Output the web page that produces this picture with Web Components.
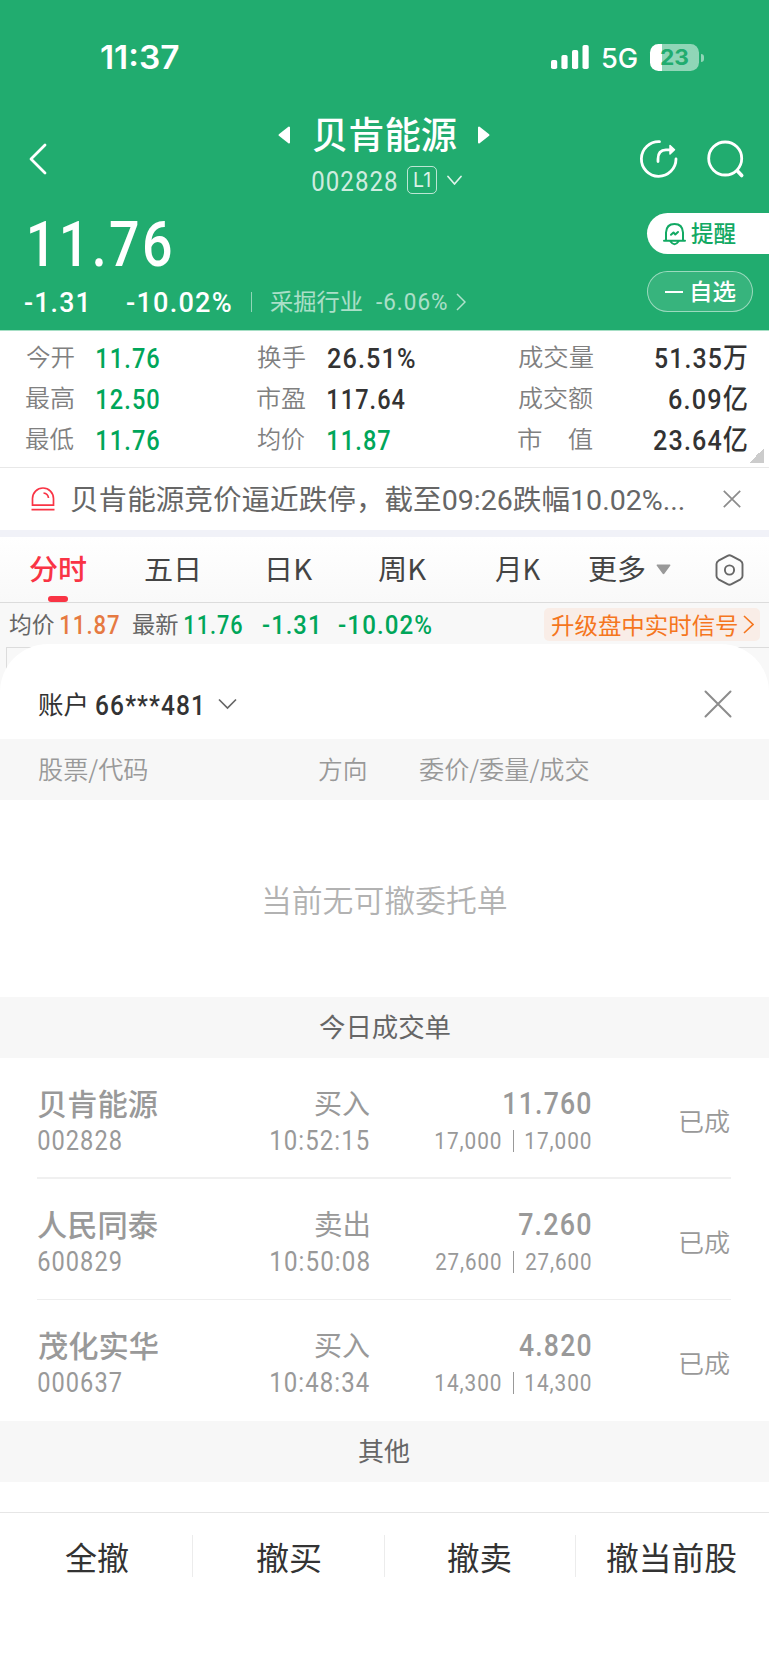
<!DOCTYPE html>
<html lang="zh-CN">
<head>
<meta charset="utf-8">
<title>贝肯能源 002828</title>
<style>
  body {
    margin: 0;
    width: 769px;
    height: 1665px;
    overflow: hidden;
    background: #fff;
    color: #333;
    font-family: Roboto, "Noto Sans CJK SC", sans-serif;
    --green: #21ac6f;
    --down: #00a65a;
    --red: #f93445;
    --grey: #999;
  }
</style>
</head>
<body>
<stock-page></stock-page>

<script>
/**
 * Registers an element whose shadow root is cloned from a template.
 * @param {string} name
 * @param {string} html
 * @returns {void}
 */
const register = (name, html) => {
  const template = document.createElement('template');
  template.innerHTML = html;
  customElements.define(name, class extends HTMLElement {
    constructor () {
      super();
      this._shadowRoot = this.attachShadow({ mode: 'open' });
      this._shadowRoot.append(template.content.cloneNode(true));
    }
  });
};

register('status-bar', `
  <style>
  :host {
    display: flex;
    align-items: center;
    height: 116px;
    padding: 0 65px 0 101px;
    box-sizing: border-box;
    font-family: Inter, sans-serif;
  }
  .time { font-size: 32px; font-weight: 600; margin: 1px auto 0 0; }
  .signal { width: 38px; height: 24px; margin: -2px 13px 0 0; }
  .net { font-size: 27px; font-weight: 500; margin: 2px 13px 0 0; }
  .battery {
    display: flex;
    align-items: center;
    width: 38px;
    height: 27px;
    padding-left: 11px;
    margin-top: -1px;
    border-radius: 8.5px;
    background: linear-gradient(90deg, #fff 12px, rgba(255, 255, 255, .5) 12px);
    color: var(--green);
    font-size: 21.5px;
    font-weight: 700;
  }
  .nub { width: 3px; height: 8px; margin: -1px 0 0 2px; border-radius: 0 3px 3px 0; background: rgba(255, 255, 255, .5); }
  </style>
  <ink-text class="time" w="78">11:37</ink-text>
  <svg class="signal" viewBox="0 0 38 24" fill="#fff">
    <rect x="0" y="15" width="6.2" height="9" rx="1.8"/>
    <rect x="10.4" y="10" width="6.2" height="14" rx="1.8"/>
    <rect x="21" y="5" width="6.2" height="19" rx="1.8"/>
    <rect x="31.5" y="0" width="6.2" height="24" rx="1.8"/>
  </svg>
  <ink-text class="net" w="35">5G</ink-text>
  <div class="battery"><ink-text w="27">23</ink-text></div>
  <div class="nub"></div>
`);

register('title-bar', `
  <style>
  :host { display: flex; height: 89px; padding: 0 23px 0 29px; align-items: flex-start; }
  svg { display: block; fill: none; stroke: #fff; stroke-linecap: round; stroke-linejoin: round; }
  .back { width: 18px; height: 32px; margin-top: 27px; }
  .center { flex: 1; display: flex; flex-direction: column; }
  .name { display: flex; align-items: center; padding-left: 231px; height: 38px; }
  .name ink-text { font-size: 37px; font-weight: 500; margin: -4px 20px 0 22px; font-family: "Noto Sans CJK SC", sans-serif; }
  .code { display: flex; align-items: center; padding-left: 265px; height: 28px; margin-top: 12px; }
  .code > ink-text { font-size: 28px; color: rgba(255, 255, 255, .8); margin-top: 3px; }
  .level {
    display: flex;
    align-items: center;
    justify-content: center;
    width: 28px;
    height: 26px;
    margin: 0 10px 0 10px;
    border: 1px solid rgba(255, 255, 255, .7);
    border-radius: 5px;
    font: 20px Inter, sans-serif;
    color: rgba(255, 255, 255, .85);
  }
  .tools { display: flex; gap: 27px; padding-top: 23px; }
  </style>
  <svg class="back" viewBox="0 0 18 32" stroke-width="2.8"><path d="M16 2 2 16 16 30"/></svg>
  <div class="center">
    <div class="name">
      <svg width="13" height="20" viewBox="0 0 13 20" stroke-width="2"><path fill="#fff" d="M11 2.500V17.500L1.500 10Z"/></svg>
      <ink-text w="144">贝肯能源</ink-text>
      <svg width="13" height="20" viewBox="0 0 13 20" stroke-width="2"><path fill="#fff" d="M2 2.500V17.500L11.500 10Z"/></svg>
    </div>
    <div class="code">
      <ink-text w="85">002828</ink-text>
      <span class="level"><ink-text w="16">L1</ink-text></span>
      <svg width="15" height="11" viewBox="0 0 15 11" stroke-width="1.700" opacity=".85"><path d="M1 1.500 7.500 9 14 1.500"/></svg>
    </div>
  </div>
  <div class="tools">
    <svg width="40" height="40" viewBox="0 0 40 40" stroke-width="2.800">
      <path d="M20.500 2.700A17.300 17.300 0 1 0 37 20"/>
      <path d="M19 22.500V20Q19 10.800 27 10.800H33"/>
      <path fill="#fff" stroke-width="1.500" d="M31 6.500 35.500 10.800 31 15Z"/>
    </svg>
    <svg width="40" height="40" viewBox="0 0 40 40" stroke-width="2.800">
      <circle cx="19.200" cy="19.500" r="16.500"/><path stroke-width="3.600" d="M31.500 32 35.700 36.500"/>
    </svg>
  </div>
`);

register('price-panel', `
  <style>
  :host { display: grid; grid-template-columns: 1fr 122px; height: 125px; }
  .big { height: 79px; line-height: 79px; padding-left: 30px; font-size: 63px; font-weight: 500; }
  .sub { display: flex; align-items: center; height: 38px; padding-left: 25px; font-size: 28px; font-weight: 500; }
  .pct { margin-left: 41px; }
  .bar { width: 1px; height: 20px; margin: -3px 18px 0 20px; background: rgba(255, 255, 255, .5); }
  .trade { font: 23px "Noto Sans CJK SC", sans-serif; opacity: .62; margin-top: -6px; }
  .tradepct { font-size: 24px; font-weight: 400; opacity: .62; margin: -2px 9px 0 14px; }
  .side { display: flex; flex-direction: column; gap: 17px; padding-top: 8px; }
  .pill { display: flex; align-items: center; height: 41px; box-sizing: border-box; font: 500 23px "Noto Sans CJK SC", sans-serif; }
  .remind { background: #fff; color: #12a963; border-radius: 21px 0 0 21px; padding-left: 15px; }
  .remind ink-text { margin: -1px 0 0 5px; }
  .mine { width: 106px; border: 1px solid rgba(255, 255, 255, .5); border-radius: 21px; background: rgba(255, 255, 255, .1); padding-left: 17px; }
  .mine i { width: 18px; height: 2px; background: #fff; margin-right: 9px; }
  .mine ink-text { margin-top: -1px; }
  </style>
  <div>
    <div class="big"><ink-text w="141">11.76</ink-text></div>
    <div class="sub">
      <ink-text w="61">-1.31</ink-text>
      <ink-text class="pct" w="104">-10.02%</ink-text>
      <span class="bar"></span>
      <ink-text class="trade" w="92">采掘行业</ink-text>
      <ink-text class="tradepct" w="71">-6.06%</ink-text>
      <svg width="10" height="18" viewBox="0 0 10 18" fill="none" stroke="#fff" stroke-width="1.500" opacity=".65" style="margin-top:-3px"><path d="M1 1 9 9 1 17"/></svg>
    </div>
  </div>
  <div class="side">
    <div class="pill remind">
      <svg width="24" height="24" viewBox="0 0 24 24" fill="none" stroke="#12a963" stroke-width="2" stroke-linecap="round" stroke-linejoin="round">
        <path d="M4 18.500V10.500Q4.500 2 12.500 2T21 10.500V18.500M2 18.700H23M8.500 19.500Q12.500 25 16.500 19.500M9 12.800 11.500 10.500 13.300 12.500 16 10"/>
      </svg>
      <ink-text w="45">提醒</ink-text>
    </div>
    <div class="pill mine"><i></i><ink-text w="44">自选</ink-text></div>
  </div>
`);

register('stat-grid', `
  <style>
  :host {
    display: grid;
    grid-template-columns: 71px 160px 71px 190px 1fr auto;
    grid-auto-rows: 41px;
    align-items: center;
    height: 137px;
    box-sizing: border-box;
    padding: 8px 22px 0 26px;
    border-bottom: 1px solid #e8e8e8;
    position: relative;
    font-size: 28px;
    font-weight: 500;
  }
  ink-text { margin-top: -1px; }
  .k { font: 350 24px "Noto Sans CJK SC", sans-serif; color: #808080; margin-top: -9px; }
  .d { color: var(--down); }
  .r { justify-self: end; }
  .corner { position: absolute; right: 5px; bottom: 4px; width: 15px; height: 15px; background: linear-gradient(135deg, transparent 50%, #ccc 50%); }
  </style>
  <ink-text class="k" w="48">今开</ink-text><ink-text class="d" w="62">11.76</ink-text>
  <ink-text class="k" w="48">换手</ink-text><ink-text w="87">26.51%</ink-text>
  <ink-text class="k" w="75">成交量</ink-text><ink-text class="r" w="92">51.35万</ink-text>
  <ink-text class="k" w="48">最高</ink-text><ink-text class="d" w="62">12.50</ink-text>
  <ink-text class="k" w="48">市盈</ink-text><ink-text w="77">117.64</ink-text>
  <ink-text class="k" w="75">成交额</ink-text><ink-text class="r" w="78">6.09亿</ink-text>
  <ink-text class="k" w="48">最低</ink-text><ink-text class="d" w="62">11.76</ink-text>
  <ink-text class="k" w="48">均价</ink-text><ink-text class="d" w="62">11.87</ink-text>
  <ink-text class="k" w="74">市　值</ink-text><ink-text class="r" w="93">23.64亿</ink-text>
  <div class="corner"></div>
`);

register('notice-bar', `
  <style>
  :host { display: flex; align-items: center; height: 69px; box-sizing: border-box; padding: 0 28px 0 31px; border-bottom: 7px solid #f1f2f8; }
  ink-text { font-size: 28px; font-weight: 400; color: #666; margin: 4px auto 0 16px; }
  </style>
  <svg width="24" height="24" viewBox="0 0 24 24" fill="none" stroke="#f93445" stroke-width="1.700">
    <path d="M1.500 18.200V11.500A10.500 10.500 0 0 1 22.500 11.500V18.200ZM.500 22.700H23.500M12.500 6Q17 6.500 17.500 11"/>
  </svg>
  <ink-text w="613">贝肯能源竞价逼近跌停，截至09:26跌幅10.02%...</ink-text>
  <svg width="18" height="18" viewBox="0 0 18 18" stroke="#8c8c8c" stroke-width="1.700"><path d="M.800.800 17.200 17.200M17.200.800.800 17.200"/></svg>
`);

register('period-tabs', `
  <style>
  :host {
    display: flex;
    align-items: center;
    height: 66px;
    box-sizing: border-box;
    padding: 0 25px 0 30px;
    border-bottom: 1px solid #dcdcdc;
    background: linear-gradient(#fff, #f9f9f9);
    position: relative;
    font: 28px "Noto Sans CJK SC", sans-serif;
    color: #444;
  }
  ink-text { margin-top: -1px; }
  .on { color: var(--red); font-weight: 500; }
  .line { position: absolute; left: 48px; bottom: 0; width: 20px; height: 6px; border-radius: 3px; background: var(--red); }
  .set { margin-left: auto; }
  </style>
  <ink-text class="on" w="57">分时</ink-text>
  <ink-text w="53" style="margin-left:58px">五日</ink-text>
  <ink-text w="44" style="margin-left:70px">日K</ink-text>
  <ink-text w="48" style="margin-left:66px">周K</ink-text>
  <ink-text w="45" style="margin-left:69px">月K</ink-text>
  <ink-text w="56" style="margin-left:49px">更多</ink-text>
  <svg width="15" height="11" viewBox="0 0 15 11" style="margin-left:11px"><path fill="#999" d="M1 .500H14Q15 1 14 2L8.500 9.500Q7.500 11 6.500 9.500L1 2Q0 1 1 .500Z"/></svg>
  <svg class="set" width="29" height="32" viewBox="0 0 29 32" fill="none" stroke="#666" stroke-width="1.900" stroke-linejoin="round">
    <path d="M12.500 1.800Q14.500.800 16.500 1.800L25.500 6.700Q27.500 8 27.500 10V22Q27.500 24 25.500 25.300L16.500 30.200Q14.500 31.200 12.500 30.200L3.500 25.300Q1.500 24 1.500 22V10Q1.500 8 3.500 6.700Z"/>
    <circle cx="14.500" cy="16" r="4.600"/>
  </svg>
  <div class="line"></div>
`);

register('price-line', `
  <style>
  :host { display: flex; align-items: center; height: 41px; padding: 0 9px; background: #f8f8f8; font-size: 26px; font-weight: 500; color: var(--down); }
  ink-text { margin-top: 5px; }
  .k { font: 22.5px "Noto Sans CJK SC", sans-serif; color: #666; margin-top: -1px; }
  .up { display: flex; align-items: center; width: 209px; height: 33px; margin: 1px 0 0 auto; padding-left: 7px; border-radius: 5px; background: #f9ede7; }
  .up ink-text { font: 22.500px "Noto Sans CJK SC", sans-serif; color: #f5761e; margin: -1px 6px 0 0; }
  </style>
  <ink-text class="k" w="45">均价</ink-text>
  <ink-text w="58" style="margin-left:7px;color:#e67a42">11.87</ink-text>
  <ink-text class="k" w="45" style="margin-left:14px">最新</ink-text>
  <ink-text w="57" style="margin-left:7px">11.76</ink-text>
  <ink-text w="54" style="margin-left:21px">-1.31</ink-text>
  <ink-text w="92" style="margin-left:22px">-10.02%</ink-text>
  <div class="up">
    <ink-text w="186">升级盘中实时信号</ink-text>
    <svg width="11" height="19" viewBox="0 0 11 19" fill="none" stroke="#f5761e" stroke-width="1.600"><path d="M1 1 10 9.500 1 18"/></svg>
  </div>
`);

register('chart-area', `
  <style>
  :host { display: block; height: 1021px; box-sizing: border-box; background: #f8f8f8; position: relative; }
  .frame { position: absolute; top: 3px; left: 6px; right: 0; height: 60px; border: 1px solid #dcdcdc; border-width: 1px 0 0 1px; }
  .sheet { position: relative; height: 100%; border-radius: 48px 48px 0 0; background: #fff; overflow: hidden; }
  </style>
  <div class="frame"></div>
  <div class="sheet"><slot></slot></div>
`);

register('sheet-header', `
  <style>
  :host { display: flex; align-items: center; height: 95px; box-sizing: border-box; padding: 26px 37px 0 38px; }
  .k { font: 25px "Noto Sans CJK SC", sans-serif; margin-top: -4px; }
  .n { font-size: 27px; font-weight: 500; margin: 3px 17px 0 10px; }
  .x { margin: -2px 0 0 auto; }
  </style>
  <ink-text class="k" w="48">账户</ink-text>
  <ink-text class="n" w="105">66***481</ink-text>
  <svg width="19" height="12" viewBox="0 0 19 12" fill="none" stroke="#666" stroke-width="1.700" style="margin-top:-2px"><path d="M1 1.500 9.500 10 18 1.500"/></svg>
  <svg class="x" width="28" height="28" viewBox="0 0 28 28" stroke="#8c8c8c" stroke-width="2" stroke-linecap="round"><path d="M1.500 1.500 26.500 26.500M26.500 1.500 1.500 26.500"/></svg>
`);

register('table-head', `
  <style>
  :host { display: grid; grid-template-columns: 281px 100px 1fr; align-items: center; height: 61px; padding-left: 38px; background: #f7f7f7; color: var(--grey); font: 350 24.500px "Noto Sans CJK SC", sans-serif; }
  ink-text { margin-top: -1px; }
  </style>
  <ink-text w="109">股票/代码</ink-text>
  <ink-text w="47">方向</ink-text>
  <ink-text w="170">委价/委量/成交</ink-text>
`);

register('empty-tip', `
  <style>
  :host { display: flex; justify-content: center; align-items: center; height: 197px; color: #b2b2b2; font: 350 30.500px "Noto Sans CJK SC", sans-serif; }
  ink-text { margin-top: 1px; }
  </style>
  <ink-text w="242">当前无可撤委托单</ink-text>
`);

register('section-band', `
  <style>
  :host { display: flex; justify-content: center; align-items: center; height: 61px; background: #f7f7f7; color: #666; font: 26px "Noto Sans CJK SC", sans-serif; padding-bottom: 3px; box-sizing: border-box; }
  </style>
  <slot></slot>
`);

/**
 * @class TradeRow
 */
class TradeRow extends HTMLElement {
  /**
    * @function constructor
    */
  constructor () {
    super();
    const get = (name) => this.getAttribute(name);
    this._shadowRoot = this.attachShadow({ mode: 'open' });
    this._shadowRoot.innerHTML = `
      <style>
      :host {
        display: grid;
        grid-template-columns: 120px 211px 222px 1fr;
        grid-template-rows: 40px 30px;
        align-items: center;
        height: 121px;
        box-sizing: border-box;
        margin: 0 38px 0 37px;
        padding: 25px 2px 0 1px;
        border-bottom: var(--row-line, 1px solid #eee);
        color: var(--grey);
        font-weight: 500;
      }
      ink-text { justify-self: end; }
      .name { font: 500 30px "Noto Sans CJK SC", sans-serif; justify-self: start; margin-top: -3px; }
      .side { font: 28px "Noto Sans CJK SC", sans-serif; margin-top: -2px; }
      .price { font-size: 31px; margin-top: 1px; }
      .state { font: 350 25px "Noto Sans CJK SC", sans-serif; grid-row: 1 / 3; grid-column: 4; align-self: center; margin-top: 4px; }
      .code, .time { font-size: 27px; font-weight: 450; margin-top: 6px; }
      .code { justify-self: start; }
      .vol { display: flex; align-items: center; justify-content: flex-end; font-size: 24px; font-weight: 450; margin-top: 6px; }
      .vol i { width: 1.500px; height: 22px; margin: 0 12px; background: var(--grey); }
      </style>
      <ink-text class="name" w="120">${get('name')}</ink-text>
      <ink-text class="side" w="54">${get('side')}</ink-text>
      <ink-text class="price" w="${get('pw')}">${get('price')}</ink-text>
      <ink-text class="state" w="49">已成</ink-text>
      <ink-text class="code" w="83">${get('code')}</ink-text>
      <ink-text class="time" w="98">${get('time')}</ink-text>
      <div class="vol"><ink-text w="65">${get('volume')}</ink-text><i></i><ink-text w="65">${get('volume')}</ink-text></div>
    `;
  }
}
customElements.define('trade-row', TradeRow);

register('action-bar', `
  <style>
  :host { display: grid; grid-template-columns: repeat(4, 1fr); margin-top: 30px; padding: 22px 2px 0 0; border-top: 1px solid #e6e6e6; font: 32px "Noto Sans CJK SC", sans-serif; }
  div { display: flex; justify-content: center; align-items: center; height: 42px; border-left: 1px solid #ececec; }
  div:first-of-type { border-color: transparent; }
  </style>
  <div><ink-text w="63">全撤</ink-text></div>
  <div><ink-text w="63">撤买</ink-text></div>
  <div><ink-text w="63">撤卖</ink-text></div>
  <div><ink-text w="129">撤当前股</ink-text></div>
`);

register('stock-page', `
  <style>
  :host { display: block; }
  header { background: var(--green); color: #fff; border-bottom: 1px solid #a6dfc5; }
  .thick { --row-line: 2px solid #f0f0f0; }
  .last { --row-line: 0; }
  </style>
  <header>
    <status-bar></status-bar>
    <title-bar></title-bar>
    <price-panel></price-panel>
  </header>
  <stat-grid></stat-grid>
  <notice-bar></notice-bar>
  <period-tabs></period-tabs>
  <price-line></price-line>
  <chart-area>
    <sheet-header></sheet-header>
    <table-head></table-head>
    <empty-tip></empty-tip>
    <section-band><ink-text w="131">今日成交单</ink-text></section-band>
    <trade-row class="thick" name="贝肯能源" code="002828" side="买入" time="10:52:15" price="11.760" pw="87" volume="17,000"></trade-row>
    <trade-row name="人民同泰" code="600829" side="卖出" time="10:50:08" price="7.260" pw="72" volume="27,600"></trade-row>
    <trade-row class="last" name="茂化实华" code="000637" side="买入" time="10:48:34" price="4.820" pw="72" volume="14,300"></trade-row>
    <section-band><ink-text w="51">其他</ink-text></section-band>
    <action-bar></action-bar>
  </chart-area>
`);

/**
 * Single line of text, stretched so that its drawn part is exactly `w` pixels wide.
 * @class InkText
 */
class InkText extends HTMLElement {
  /**
    * @function constructor
    */
  constructor () {
    super();
    this._shadowRoot = this.attachShadow({ mode: 'open' });
    this._shadowRoot.innerHTML = `
      <style>
      :host { display: inline-block; flex: none; white-space: nowrap; line-height: 1.2; }
      span { display: inline-block; transform-origin: 0 50%; }
      </style>
      <span><slot></slot></span>
    `;
    this.$span = this._shadowRoot.querySelector('span');
  }
  /**
   * @function connectedCallback
   * @returns {void}
   */
  connectedCallback () {
    const text = this.textContent;
    const width = Number(this.getAttribute('w'));
    const style = getComputedStyle(this);
    const ctx = document.createElement('canvas').getContext('2d');
    ctx.font = `${style.fontWeight} ${style.fontSize} ${style.fontFamily}`;
    // figures are set narrow and loose
    if (/^[-\d]/.test(text) && style.fontFamily.startsWith('Roboto')) {
      const spacing = `${parseFloat(style.fontSize) * 0.045}px`;
      ctx.letterSpacing = spacing;
      this.$span.style.letterSpacing = spacing;
    }
    const box = ctx.measureText(text);
    const scale = width / (box.actualBoundingBoxRight + box.actualBoundingBoxLeft);
    this.style.width = `${width}px`;
    this.$span.style.transform = `translateX(${box.actualBoundingBoxLeft * scale}px) scaleX(${scale})`;
  }
}

// Register last, once every host around it has its styles
customElements.define('ink-text', InkText);
</script>
</body>
</html>
